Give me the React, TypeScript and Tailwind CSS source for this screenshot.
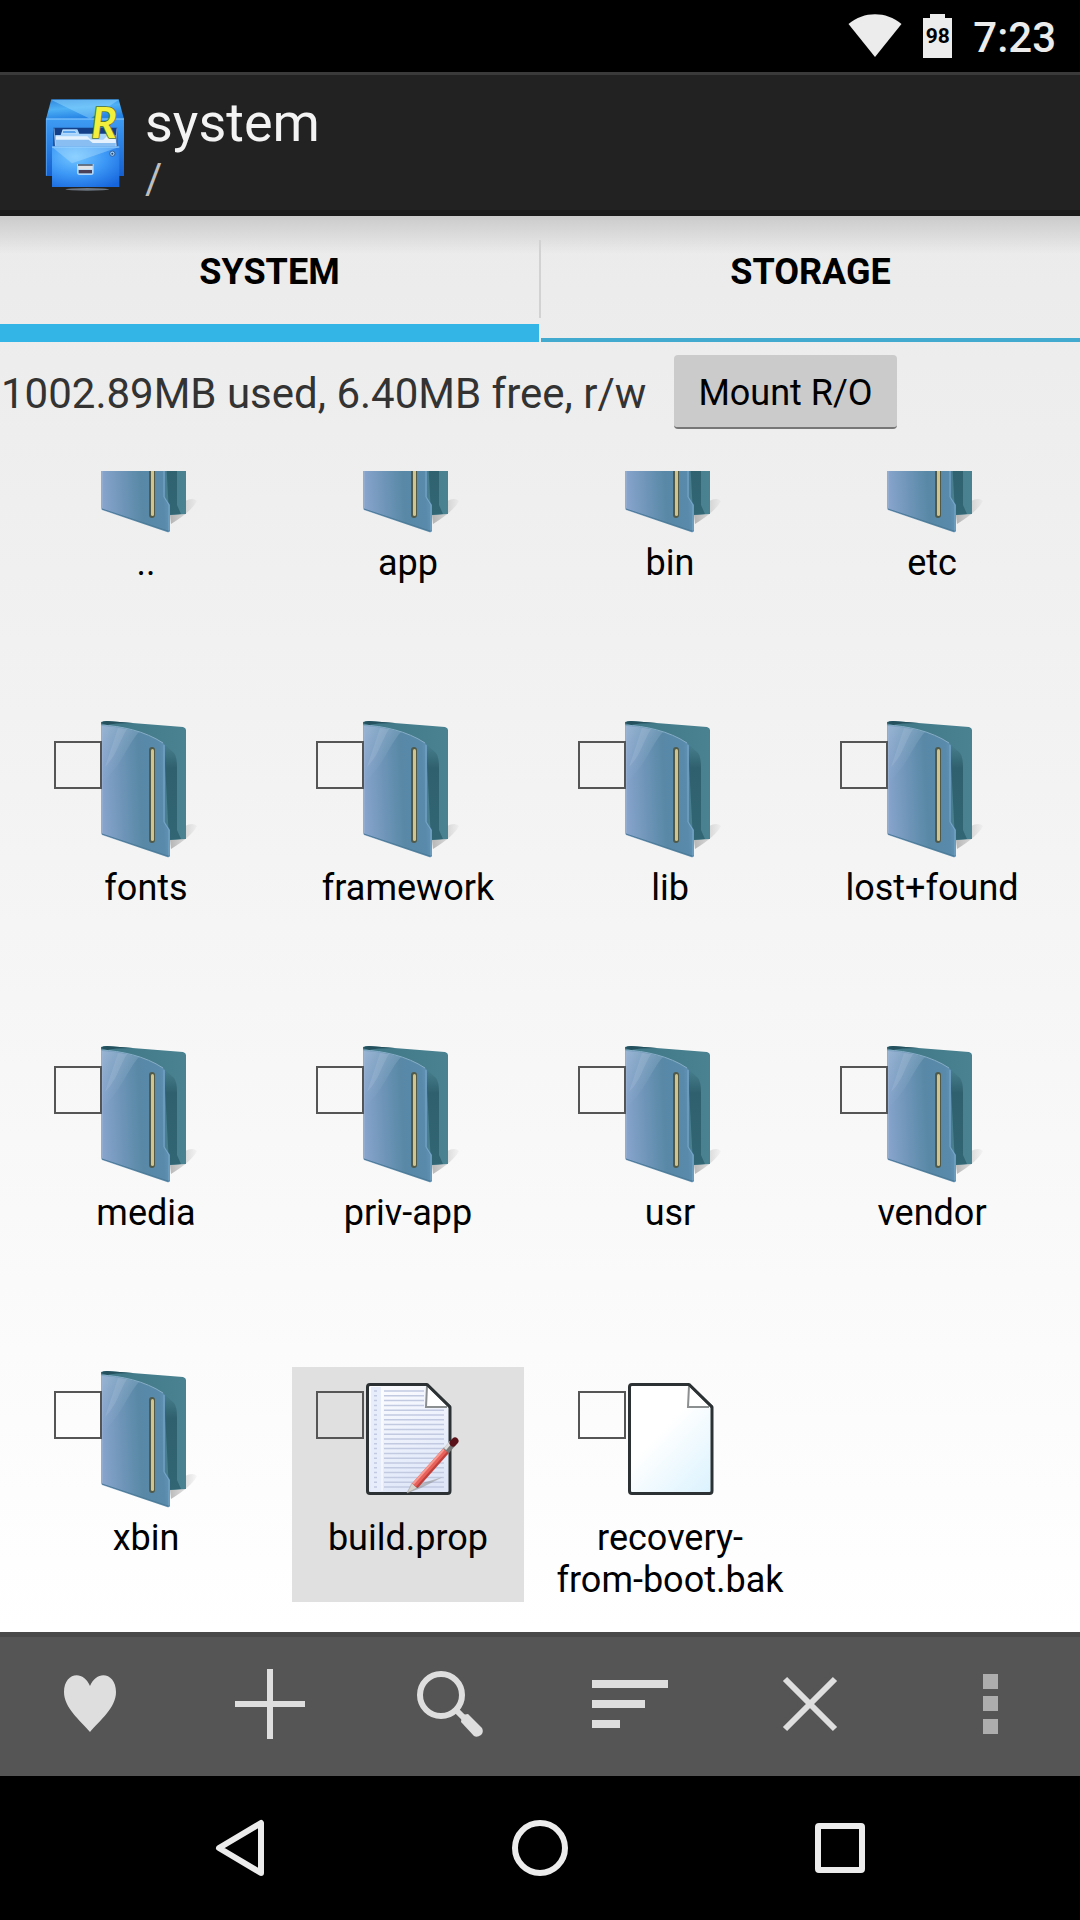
import React from "react";

type ItemKind = "folder" | "text" | "file";

interface FileItem {
  name: string;
  kind: ItemKind;
  highlighted?: boolean;
}

const items: FileItem[] = [
  { name: "..", kind: "folder" },
  { name: "app", kind: "folder" },
  { name: "bin", kind: "folder" },
  { name: "etc", kind: "folder" },
  { name: "fonts", kind: "folder" },
  { name: "framework", kind: "folder" },
  { name: "lib", kind: "folder" },
  { name: "lost+found", kind: "folder" },
  { name: "media", kind: "folder" },
  { name: "priv-app", kind: "folder" },
  { name: "usr", kind: "folder" },
  { name: "vendor", kind: "folder" },
  { name: "xbin", kind: "folder" },
  { name: "build.prop", kind: "text", highlighted: true },
  { name: "recovery-from-boot.bak", kind: "file" },
];

// Shared gradients for the item icons
const IconDefs = () => (
  <svg className="absolute h-0 w-0" aria-hidden="true">
    <defs>
      <linearGradient id="folderFront" x1="0" y1="0.3" x2="1" y2="0.2">
        <stop offset="0" stopColor="#86a3cb" />
        <stop offset="0.25" stopColor="#7096b9" />
        <stop offset="0.55" stopColor="#5888a6" />
        <stop offset="0.85" stopColor="#5a8aab" />
        <stop offset="1" stopColor="#6797bd" />
      </linearGradient>
      <linearGradient id="folderShine" x1="0" y1="0" x2="0.4" y2="1">
        <stop offset="0" stopColor="#b4cbe2" stopOpacity="0.45" />
        <stop offset="1" stopColor="#8fb0cc" stopOpacity="0" />
      </linearGradient>
      <linearGradient id="folderBack" x1="0" y1="0" x2="1" y2="0">
        <stop offset="0" stopColor="#3f7787" />
        <stop offset="1" stopColor="#4a8291" />
      </linearGradient>
      <linearGradient id="folderInner" x1="0" y1="0" x2="0" y2="1">
        <stop offset="0" stopColor="#2f606d" stopOpacity="0" />
        <stop offset="0.25" stopColor="#2f606d" />
        <stop offset="1" stopColor="#326674" />
      </linearGradient>
      <linearGradient id="floorShadow" x1="0" y1="0" x2="1" y2="0">
        <stop offset="0" stopColor="#777" stopOpacity="0.5" />
        <stop offset="1" stopColor="#888" stopOpacity="0.05" />
      </linearGradient>
      <linearGradient id="pagePlain" x1="0.2" y1="0" x2="1" y2="1">
        <stop offset="0.35" stopColor="#ffffff" />
        <stop offset="1" stopColor="#daf2fe" />
      </linearGradient>
      <linearGradient id="pageText" x1="0.2" y1="0" x2="0.6" y2="1">
        <stop offset="0" stopColor="#fbfcff" />
        <stop offset="1" stopColor="#dee6f8" />
      </linearGradient>
    </defs>
  </svg>
);

const FolderIcon = () => (
  <svg viewBox="0 0 144 144" className="h-36 w-36" aria-hidden="true">
    <path d="M96 123 L111 109 Q119 105 123 109 Q118 119 97 132 Z" fill="url(#floorShadow)" />
    <path d="M27 5 Q29 4 33 4 L109 10 Q112 11 112 13 V122 L94 123 L27 100 Z" fill="url(#folderBack)" />
    <path d="M90 27 L100 36 Q103 40 103 50 V113 L107 122 L95 123 Z" fill="url(#folderInner)" />
    <path d="M27 6 Q29 4 33 4 L59 6 Q39 6 33 8 Z" fill="#244f5c" />
    <path
      d="M27 8 C47 9 71 14 89 26 Q91 27 91 30 V105 L96 113 V139 Q95 141 93 140 L28 118 Q27 117 27 115 Z"
      fill="url(#folderFront)"
    />
    <path d="M28 9 C44 10 54 12 65 15 C53 28 48 48 28 66 Z" fill="url(#folderShine)" />
    <path d="M44 11 L53 12 C45 25 43 38 31 50 Z" fill="#c1d5e8" opacity="0.18" />
    <path d="M28 9 V116" stroke="#9db6d5" />
    <path d="M27 8 C47 9 71 14 89 26" stroke="#86adc6" fill="none" />
    <path d="M90 28 V105 L95 113 V138" stroke="#77a8c8" fill="none" />
    <path d="M28 117 L94 139" stroke="#4c7b97" />
    <rect x="75" y="30" width="6" height="96" rx="3" fill="#4f5a4a" />
    <rect x="77" y="32" width="3" height="92" rx="1.5" fill="#cfc48e" />
  </svg>
);

const PageIcon = ({ lined }: { lined: boolean }) => (
  <svg viewBox="0 0 144 144" className="h-36 w-36" aria-hidden="true">
    <g transform="translate(1 0)">
      <path
        d="M33 17.5 H90 L113 40 V124 Q113 126.5 110.5 126.5 H33 Q30.5 126.5 30.5 124 V20 Q30.5 17.5 33 17.5 Z"
        fill={lined ? "url(#pageText)" : "url(#pagePlain)"}
        stroke="#2c3233"
        strokeWidth="3"
        strokeLinejoin="round"
      />
      {lined && (
        <>
          <path d="M34 20 H44 V125 H34 Z" fill="#e8edfb" />
          <path d="M45 24 V124" stroke="#ffffff" />
          {Array.from({ length: 21 }, (_, i) => (
            <path
              key={i}
              d={`M37 ${24 + i * 4.8} h3 M47 ${24 + i * 4.8} H${i < 4 ? 87 : 107}`}
              stroke="#c2cae2"
              strokeWidth="1.5"
            />
          ))}
        </>
      )}
      <path d="M90 19 L89 40 L111 40 Z" fill="#fff" />
      <path d="M90 19 L89 40 H110" stroke="#8b8f90" strokeWidth="2" fill="none" />
      <path d="M90 17.5 L113 40" stroke="#2c3233" strokeWidth="3" />
      {lined && (
        <>
          <path d="M71 126 L82 117 L106 110 L84 121 Z" fill="#888" opacity="0.5" />
          <path d="M70 126 L75 116 L80 121 Z" fill="#d8d3cc" stroke="#999" strokeWidth="0.5" />
          <path d="M78 119 L110 83" stroke="#c0413c" strokeWidth="7" />
          <path d="M77 118 L109 82" stroke="#e8615a" strokeWidth="5" />
          <path d="M76 117 L108 81" stroke="#f59b92" strokeWidth="2" />
          <path d="M109 84 L116 76" stroke="#777" strokeWidth="7" />
          <path d="M108 82 L114 75" stroke="#ddd" strokeWidth="3" />
          <path d="M116 76 L118 74" stroke="#5a1218" strokeWidth="7" strokeLinecap="round" />
        </>
      )}
    </g>
  </svg>
);

const AppLogo = () => (
  <svg viewBox="0 0 276 312" className="h-[104px] w-[92px]" aria-hidden="true">
    <defs>
      <linearGradient id="cabTop" x1="0" y1="0" x2="0.3" y2="1">
        <stop offset="0" stopColor="#2f86dd" />
        <stop offset="0.5" stopColor="#4eb0f5" />
        <stop offset="1" stopColor="#2583e4" />
      </linearGradient>
      <linearGradient id="cabBody" x1="0" y1="0" x2="0" y2="1">
        <stop offset="0" stopColor="#3e9cf3" />
        <stop offset="1" stopColor="#155fce" />
      </linearGradient>
      <radialGradient id="cabDrawer" cx="0.35" cy="0.25" r="0.9">
        <stop offset="0" stopColor="#74c6ff" />
        <stop offset="0.5" stopColor="#3c98f6" />
        <stop offset="1" stopColor="#1765dc" />
      </radialGradient>
    </defs>
    <ellipse cx="142" cy="289" rx="66" ry="4" fill="#6c7580" />
    <path d="M34 19 H236 L252 78 H18 Z" fill="url(#cabTop)" />
    <path d="M34 21 H236 L150 77 Z" fill="#9addff" opacity="0.45" />
    <path d="M18 77 H252 V249 H18 Z" fill="url(#cabBody)" />
    <path d="M18 78 H252" stroke="#8ccbff" strokeWidth="3" />
    <path d="M19 78 V248" stroke="#68b4fb" strokeWidth="2" />
    <path d="M40 104 H232 V160 H40 Z" fill="#123f88" />
    <path d="M46 126 H62 L68 109 H112 L118 122 H222 L228 158 H46 Z" fill="#a6d3fb" />
    <path d="M68 113 H105 L111 121 H67 Z" fill="#4b9ae9" stroke="#d5ecff" strokeWidth="2" />
    <path d="M47 130 L142 130 L152 140 H190 L204 126 H226 L230 160 H47 Z" fill="#e5f2fd" />
    <path d="M48 140 H146 L158 150 H228 V160 H48 Z" fill="#89bef2" />
    <path d="M42 106 L46 160 M231 106 L227 160" stroke="#b8dcff" strokeWidth="2" />
    <path d="M36 161 H238 V282 H36 Z" fill="url(#cabDrawer)" />
    <path d="M36 162 H238 L96 211 Z" fill="#b1e2ff" opacity="0.4" />
    <path d="M36 162 H238" stroke="#9dd5ff" strokeWidth="3" />
    <circle cx="217" cy="182" r="8" fill="#9acbf4" stroke="#2c5e9e" strokeWidth="3" />
    <circle cx="217" cy="182" r="3" fill="#27466f" />
    <path d="M111 213 H161 V238 Q161 246 154 246 H118 Q111 246 111 238 Z" fill="#b1d8fb" />
    <path d="M115 216 H157 V229 H115 Z" fill="#dfe3e8" />
    <path d="M114 216 H158" stroke="#333e52" strokeWidth="4" />
    <path d="M116 231 H156 V241 H116 Z" fill="#4b4058" />
    <text
      x="154"
      y="134"
      fontFamily="Lato, sans-serif"
      fontSize="128"
      fontWeight="700"
      fontStyle="italic"
      fill="#f2f03d"
      stroke="#53722b"
      strokeWidth="5"
      paintOrder="stroke"
    >
      R
    </text>
  </svg>
);

const ItemIcon = ({ kind }: { kind: ItemKind }) =>
  kind === "folder" ? <FolderIcon /> : <PageIcon lined={kind === "text"} />;

const FileCell: React.FC<FileItem> = ({ name, kind, highlighted }) => (
  <div className={highlighted ? "relative bg-[#e0e0e0]" : "relative"}>
    <label htmlFor={name} className="flex flex-col items-center gap-1.5">
      <ItemIcon kind={kind} />
      <span className="min-h-[85px] w-full px-px text-center text-[36px] leading-[42px] text-black">
        {name}
      </span>
    </label>
    <input
      id={name}
      type="checkbox"
      className="absolute left-6 top-6 h-12 w-12 appearance-none border-2 border-[#555]"
    />
  </div>
);

const StatusBar = () => (
  <div className="flex h-[72px] items-center justify-end gap-[21px] bg-black pr-6 text-[#ececec]">
    <svg viewBox="0 0 54 44" className="h-11 w-[54px]" aria-hidden="true">
      <path d="M0.5 10 C16 -3 38 -3 53.5 10 L27 43 Z" fill="#ececec" />
    </svg>
    <div className="relative flex h-11 w-[29px] items-center justify-center">
      <svg viewBox="0 0 29 44" className="absolute inset-0" aria-hidden="true">
        <path d="M0 4 H7 V0 H22 V4 H29 V44 H0 Z" fill="#ececec" />
      </svg>
      <span className="relative text-[21px] leading-6 font-bold text-black">98</span>
    </div>
    <span className="pt-1 text-[42px] leading-[48px] font-medium">7:23</span>
  </div>
);

const toolbarActions = [
  {
    label: "Bookmarks",
    icon: (
      <path
        d="M48 76 C38 64 22 52 22 36 C22 17 41 13 48 30 C55 13 74 17 74 36 C74 52 58 64 48 76 Z"
        fill="#dedede"
      />
    ),
  },
  {
    label: "Add",
    icon: <path d="M48 13 V83 M13 48 H83" stroke="#dedede" strokeWidth="6" />,
  },
  {
    label: "Search",
    icon: (
      <>
        <circle cx="39" cy="39" r="21" stroke="#dedede" strokeWidth="6" fill="none" />
        <path d="M54 54 L62 62" stroke="#dedede" strokeWidth="6" />
        <path d="M60 59 L66 58 L80 72 Q82 76 79 79 Q75 82 72 80 L59 66 Z" fill="#dedede" />
      </>
    ),
  },
  {
    label: "Sort",
    icon: <path d="M10 24 H86 V32 H10 Z M10 44 H63 V52 H10 Z M10 64 H38 V72 H10 Z" fill="#dedede" />,
  },
  {
    label: "Close",
    icon: <path d="M23 23 L73 73 M73 23 L23 73" stroke="#dedede" strokeWidth="6" />,
  },
  {
    label: "More",
    icon: <path d="M41 18 h15 v15 h-15 Z M41 40 h15 v15 h-15 Z M41 63 h15 v15 h-15 Z" fill="#adadad" />,
  },
];

const navButtons = [
  { label: "Back", icon: <path d="M69 23 V73 L27 48 Z" /> },
  { label: "Home", icon: <circle cx="48" cy="48" r="25" /> },
  { label: "Recents", icon: <rect x="26" y="26" width="44" height="44" rx="1" /> },
];

const tabs = [
  { label: "SYSTEM", active: true },
  { label: "STORAGE", active: false },
];

export default function App() {
  return (
    <div className="flex min-h-screen flex-col bg-black font-[Roboto,sans-serif]">
      <IconDefs />
      <StatusBar />

      <header className="flex h-36 items-center gap-[13px] border-t-[3px] border-b-[6px] border-t-[#3a3a3a] border-b-[#1b1b1b] bg-[#222] pt-1 pl-10">
        <AppLogo />
        <div className="flex flex-col pt-1">
          <h1 className="text-[54px] leading-[63px] text-[#f3f3f3]">system</h1>
          <p className="text-[42px] leading-[49px] text-[#bebebe]">/</p>
        </div>
      </header>

      <main className="flex flex-1 flex-col bg-linear-to-b from-[#ebebeb] to-white">
        <div
          role="tablist"
          className="flex h-[126px] bg-linear-to-b from-[#cbcbcb] to-transparent to-30%"
        >
          {tabs.map((tab, i) => (
            <React.Fragment key={tab.label}>
              {i > 0 && <div className="mt-6 h-[78px] w-0.5 bg-[#d2d2d2]" />}
              <button role="tab" aria-selected={tab.active} className="flex flex-1 flex-col">
                <span className="flex w-full flex-1 items-center justify-center pt-1 text-[36px] leading-[42px] font-bold text-black">
                  {tab.label}
                </span>
                <span className="flex h-[18px] w-full flex-col justify-end">
                  <span className={tab.active ? "h-[18px] bg-[#33b5e5]" : "h-1 bg-[#42a9cf]"} />
                </span>
              </button>
            </React.Fragment>
          ))}
        </div>

        <div className="flex items-center gap-7 pt-[13px] pb-[42px] pl-px">
          <p className="pt-1 text-[42px] leading-[48px] text-[#333]">
            1002.89MB used, 6.40MB free, r/w
          </p>
          <button className="h-[74px] rounded-sm border-b-2 border-[#777] bg-[#cbcbcb] px-6 pt-1 text-[36px] leading-[42px] text-black">
            Mount R/O
          </button>
        </div>

        {/* list is scrolled a little, first row is cut */}
        <div className="flex-1 overflow-hidden">
          <div className="-mt-[79px] grid grid-cols-4 gap-x-[30px] gap-y-[90px] pr-8 pb-[30px] pl-[30px]">
            {items.map((item) => (
              <FileCell key={item.name} {...item} />
            ))}
          </div>
        </div>
      </main>

      <div className="grid h-36 grid-cols-6 bg-[#555] inset-shadow-[0_5px_0_#494949]">
        {toolbarActions.map((action) => (
          <button key={action.label} aria-label={action.label} className="flex items-center justify-center">
            <svg viewBox="0 0 96 96" className="h-24 w-24">
              {action.icon}
            </svg>
          </button>
        ))}
      </div>

      <nav className="grid h-36 grid-cols-3 bg-black px-[90px]">
        {navButtons.map((btn) => (
          <button key={btn.label} aria-label={btn.label} className="flex items-center justify-center">
            <svg
              viewBox="0 0 96 96"
              className="h-24 w-24"
              fill="none"
              stroke="#ececec"
              strokeWidth="6"
              strokeLinejoin="round"
            >
              {btn.icon}
            </svg>
          </button>
        ))}
      </nav>
    </div>
  );
}
